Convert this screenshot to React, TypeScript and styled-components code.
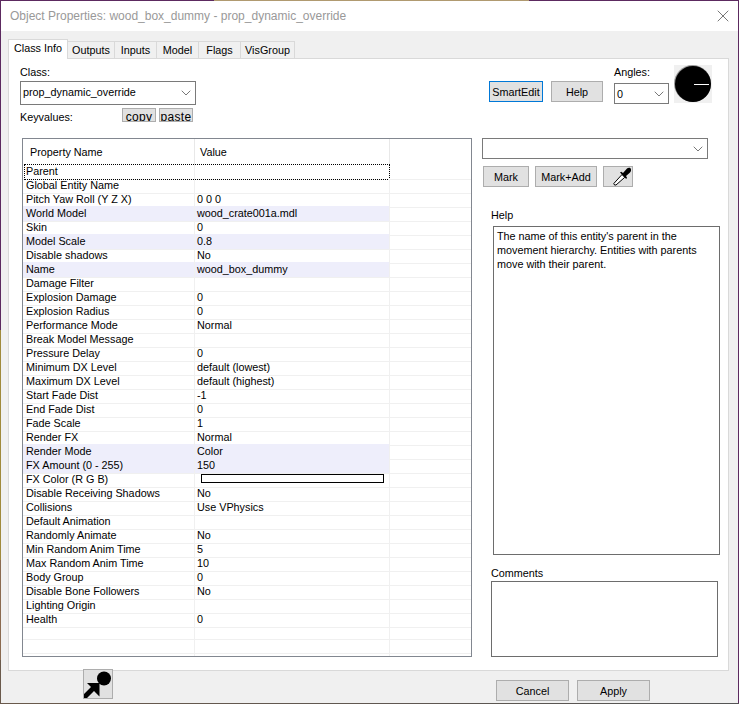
import { ReactNode } from "react";
import styled, { createGlobalStyle } from "styled-components";
import { ChevronDown, X } from "lucide-react";

const GlobalStyle = createGlobalStyle`
  html, body {
    margin: 0;
    padding: 0;
    background: #5c2a60;
  }
  * {
    box-sizing: border-box;
  }
`;

const Dialog = styled.div`
  display: flex;
  flex-direction: column;
  width: 739px;
  height: 704px;
  overflow: hidden;
  padding: 1px 1px 1px 1px;
  background:
    linear-gradient(90deg, #5c2a60 0 214px, #b09a70 214px 529px, #5c2a60 529px) top / 100% 1px no-repeat,
    linear-gradient(90deg, #6a5a4c, #555) bottom / 100% 1px no-repeat,
    linear-gradient(180deg, #5c2a60 0 330px, #a08a3c 330px 560px, #8a6a50 560px 660px, #6a5a4c 660px) left / 1px 100% no-repeat,
    #5c2a60;
  font-family: "Liberation Sans", Arial, sans-serif;
  font-size: 10.8px;
  color: #000;
`;

const TitleBar = styled.div`
  display: flex;
  flex: none;
  align-items: center;
  justify-content: space-between;
  height: 30px;
  padding: 0 5px 0 9px;
  background: #fff;
  color: #999;
  font-size: 12px;
`;

const Body = styled.div`
  display: flex;
  flex: 1;
  flex-direction: column;
  min-height: 0;
  padding: 8px 0 0 7px;
  background: #f0f0f0;
`;

const TabStrip = styled.div`
  display: flex;
  flex: none;
  align-items: flex-end;
  height: 20px;
  position: relative;
  z-index: 1;
  margin-bottom: -1px;
`;

const Tab = styled.div<{ $active?: boolean; $width: number }>`
  display: flex;
  align-items: center;
  justify-content: center;
  width: ${(p) => p.$width}px;
  height: ${(p) => (p.$active ? 20 : 18)}px;
  padding-bottom: ${(p) => (p.$active ? 3 : 0)}px;
  border: 1px solid #d9d9d9;
  border-left-width: ${(p) => (p.$active ? 1 : 0)}px;
  border-bottom: ${(p) => (p.$active ? "none" : "1px solid #d9d9d9")};
  background: ${(p) => (p.$active ? "#fff" : "#f0f0f0")};
`;

const Panel = styled.div`
  display: flex;
  flex: none;
  gap: 10px;
  width: 721px;
  height: 613px;
  padding: 6px 0 0 11px;
  border: 1px solid #d9d9d9;
  background: #fff;
`;

const LeftColumn = styled.div`
  display: flex;
  flex: none;
  flex-direction: column;
  width: 452px;
`;

const RightColumn = styled.div`
  display: flex;
  flex: 1;
  flex-direction: column;
  min-width: 0;
`;

const FieldLabel = styled.div`
  height: 15px;
  line-height: 15px;
  margin-bottom: 1px;
`;

const Select = styled.div<{ $width: number; $height: number }>`
  display: flex;
  flex: none;
  align-items: center;
  justify-content: space-between;
  width: ${(p) => p.$width}px;
  height: ${(p) => p.$height}px;
  padding: 0 1px 0 2px;
  border: 1px solid #7a7a7a;
  background: #fff;
`;

const ClassValue = styled.span`
  margin-bottom: 3px;
`;

const KeyvaluesRow = styled.div`
  display: flex;
  align-items: flex-start;
  height: 30px;
  margin-top: 3px;
`;

const KeyvaluesLabel = styled.div`
  width: 102px;
  margin-top: 3px;
`;

const ClipButton = styled.div<{ $width: number }>`
  width: ${(p) => p.$width}px;
  height: 14px;
  margin-right: 3px;
  overflow: hidden;
  border: 1px solid #adadad;
  background: #e1e1e1;
  text-align: center;
  font-size: 12px;
  line-height: 17px;
  letter-spacing: 0.3px;
`;

const Table = styled.div`
  display: flex;
  flex: none;
  flex-direction: column;
  overflow: hidden;
  width: 450px;
  height: 519px;
  margin-left: 2px;
  border: 1px solid #828790;
  background: #fff;
`;

const HeaderRow = styled.div`
  display: grid;
  flex: none;
  grid-template-columns: 172px 195px 1fr;
  height: 25px;
`;

const HeaderCell = styled.div`
  padding-left: 5px;
  line-height: 27px;
  border-right: 1px solid #e8e8e8;
  &:first-child {
    padding-left: 7px;
  }
  &:last-child {
    border-right: none;
  }
`;

const Row = styled.div<{ $focused?: boolean }>`
  display: grid;
  flex: none;
  position: relative;
  grid-template-columns: 172px 195px 1fr;
  height: 14px;
  line-height: 15px;
  &::after {
    content: "";
    display: ${(p) => (p.$focused ? "block" : "none")};
    position: absolute;
    top: 0;
    left: 1px;
    width: 364px;
    height: 14px;
    border: 1px dotted #000;
  }
`;

const NameCell = styled.div<{ $tinted?: boolean }>`
  padding-left: 3px;
  border-right: 1px solid #f0f0f0;
  border-bottom: 1px solid #f0f0f0;
  background: ${(p) => (p.$tinted ? "#eeeefb" : "transparent")};
  white-space: nowrap;
`;

const ValueCell = styled(NameCell)`
  padding-left: 2px;
`;

const BlankCell = styled.div`
  border-bottom: 1px solid #f0f0f0;
`;

const Swatch = styled.div`
  width: 183px;
  height: 9px;
  margin: 2px 0 0 4px;
  border: 1px solid #000;
  background: #fff;
`;

const ControlsRow = styled.div`
  display: flex;
  align-items: flex-start;
  height: 73px;
  padding-left: 7px;
`;

const PushButton = styled.button<{ $width: number; $default?: boolean }>`
  display: flex;
  flex: none;
  align-items: center;
  justify-content: center;
  width: ${(p) => p.$width}px;
  height: 21px;
  padding: 0;
  border: 1px solid ${(p) => (p.$default ? "#0078d7" : "#adadad")};
  border-radius: 0;
  background: #e1e1e1;
  font: inherit;
  color: #000;
`;

const TopButtons = styled.div`
  display: flex;
  gap: 8px;
  margin-top: 16px;
  width: 125px;
`;

const AnglesBlock = styled.div`
  display: flex;
  flex-direction: column;
  gap: 2px;
  width: 60px;
`;

const MarkRow = styled.div`
  display: flex;
  gap: 6px;
  margin: 7px 0 0 1px;
`;

const BoxLabel = styled.div<{ $top: number }>`
  height: 14px;
  line-height: 14px;
  margin: ${(p) => p.$top}px 0 0 9px;
`;

const HelpBox = styled.div`
  width: 227px;
  height: 329px;
  margin: 4px 0 0 11px;
  padding: 2px 3px;
  border: 1px solid #6d6d6d;
  background: #fff;
  line-height: 14px;
`;

const CommentsBox = styled.div`
  width: 227px;
  height: 76px;
  margin: 1px 0 0 9px;
  border: 1px solid #6d6d6d;
  background: #fff;
`;

const Footer = styled.div`
  display: flex;
  flex: 1;
  align-items: flex-start;
`;

const EntityButton = styled.div`
  position: relative;
  display: flex;
  width: 30px;
  height: 30px;
  margin: -2px 0 0 75px;
  border: 1px solid #adadad;
  background: #e1e1e1;
`;

const FooterButtons = styled.div`
  display: flex;
  gap: 8px;
  margin: 9px 0 0 383px;
`;

const Dial = () => (
  <svg width="38" height="38" viewBox="0 0 38 38" style={{ display: "block", background: "#f0f0f0" }}>
    <circle cx="18.5" cy="18.5" r="18.5" fill="#999" />
    <circle cx="19" cy="19" r="18" fill="#000" />
    <path d="M20 19.5H35" stroke="#fff" strokeWidth="1" />
  </svg>
);

const Dropper = () => (
  <svg width="18" height="19" viewBox="0 0 18 19" style={{ marginLeft: 7 }}>
    <path d="M1.5 18L.8 16.5 9 7.5l2.8 2.8L3 18z" fill="#fff" stroke="#000" />
    <path d="M7 5.5l1.2-.7 1.8 1.2L14 1.5C15.5 0 18 .5 18 2.5c.3 1.5-.5 2.5-1.5 3.5L13 9l1 1.8-.8 1.2z" fill="#000" />
  </svg>
);

const EntityIcon = () => (
  <svg width="28" height="28" viewBox="0 0 28 28">
    <circle cx="20" cy="8.5" r="7" fill="#000" />
    <path d="M15.5 13H3l4 4-7 7v4h3l7-7 5.5 5.5z" fill="#000" />
  </svg>
);

const Chevron = () => <ChevronDown size={16} strokeWidth={1} color="#333" />;

type Prop = { name: string; value?: string; tinted?: boolean; color?: boolean };

const tabs = [
  { label: "Class Info", width: 60, active: true },
  { label: "Outputs", width: 47 },
  { label: "Inputs", width: 42 },
  { label: "Model", width: 42 },
  { label: "Flags", width: 42 },
  { label: "VisGroup", width: 54 },
];

const props: Prop[] = [
  { name: "Parent" },
  { name: "Global Entity Name" },
  { name: "Pitch Yaw Roll (Y Z X)", value: "0 0 0" },
  { name: "World Model", value: "wood_crate001a.mdl", tinted: true },
  { name: "Skin", value: "0" },
  { name: "Model Scale", value: "0.8", tinted: true },
  { name: "Disable shadows", value: "No" },
  { name: "Name", value: "wood_box_dummy", tinted: true },
  { name: "Damage Filter" },
  { name: "Explosion Damage", value: "0" },
  { name: "Explosion Radius", value: "0" },
  { name: "Performance Mode", value: "Normal" },
  { name: "Break Model Message" },
  { name: "Pressure Delay", value: "0" },
  { name: "Minimum DX Level", value: "default (lowest)" },
  { name: "Maximum DX Level", value: "default (highest)" },
  { name: "Start Fade Dist", value: "-1" },
  { name: "End Fade Dist", value: "0" },
  { name: "Fade Scale", value: "1" },
  { name: "Render FX", value: "Normal" },
  { name: "Render Mode", value: "Color", tinted: true },
  { name: "FX Amount (0 - 255)", value: "150", tinted: true },
  { name: "FX Color (R G B)", color: true },
  { name: "Disable Receiving Shadows", value: "No" },
  { name: "Collisions", value: "Use VPhysics" },
  { name: "Default Animation" },
  { name: "Randomly Animate", value: "No" },
  { name: "Min Random Anim Time", value: "5" },
  { name: "Max Random Anim Time", value: "10" },
  { name: "Body Group", value: "0" },
  { name: "Disable Bone Followers", value: "No" },
  { name: "Lighting Origin" },
  { name: "Health", value: "0" },
  { name: "" },
  { name: "" },
  { name: "" },
];

const PropRow = ({ prop, focused }: { prop: Prop; focused: boolean }): ReactNode => (
  <Row $focused={focused}>
    <NameCell $tinted={prop.tinted}>{prop.name}</NameCell>
    <ValueCell $tinted={prop.tinted}>{prop.color ? <Swatch /> : prop.value}</ValueCell>
    <BlankCell />
  </Row>
);

const App = () => (
  <Dialog>
    <GlobalStyle />
    <TitleBar>
      <span>Object Properties: wood_box_dummy - prop_dynamic_override</span>
      <X size={20} strokeWidth={1.2} color="#777" />
    </TitleBar>
    <Body>
      <TabStrip>
        {tabs.map((t) => (
          <Tab key={t.label} $active={t.active} $width={t.width}>
            {t.label}
          </Tab>
        ))}
      </TabStrip>
      <Panel>
        <LeftColumn>
          <FieldLabel>Class:</FieldLabel>
          <Select $width={176} $height={24}>
            <ClassValue>prop_dynamic_override</ClassValue>
            <Chevron />
          </Select>
          <KeyvaluesRow>
            <KeyvaluesLabel>Keyvalues:</KeyvaluesLabel>
            <ClipButton $width={34}>copy</ClipButton>
            <ClipButton $width={34}>paste</ClipButton>
          </KeyvaluesRow>
          <Table>
            <HeaderRow>
              <HeaderCell>Property Name</HeaderCell>
              <HeaderCell>Value</HeaderCell>
              <HeaderCell />
            </HeaderRow>
            {props.map((p, i) => (
              <PropRow key={i} prop={p} focused={i === 0} />
            ))}
          </Table>
        </LeftColumn>
        <RightColumn>
          <ControlsRow>
            <TopButtons>
              <PushButton $width={54} $default>SmartEdit</PushButton>
              <PushButton $width={52}>Help</PushButton>
            </TopButtons>
            <AnglesBlock>
              <FieldLabel>Angles:</FieldLabel>
              <Select $width={55} $height={21}>
                <span>0</span>
                <Chevron />
              </Select>
            </AnglesBlock>
            <Dial />
          </ControlsRow>
          <Select $width={226} $height={21}>
            <span />
            <Chevron />
          </Select>
          <MarkRow>
            <PushButton $width={46}>Mark</PushButton>
            <PushButton $width={62}>Mark+Add</PushButton>
            <PushButton $width={30}><Dropper /></PushButton>
          </MarkRow>
          <BoxLabel $top={21}>Help</BoxLabel>
          <HelpBox>
            The name of this entity's parent in the movement hierarchy. Entities with parents move with their parent.
          </HelpBox>
          <BoxLabel $top={11}>Comments</BoxLabel>
          <CommentsBox />
        </RightColumn>
      </Panel>
      <Footer>
        <EntityButton><EntityIcon /></EntityButton>
        <FooterButtons>
          <PushButton $width={73}>Cancel</PushButton>
          <PushButton $width={73}>Apply</PushButton>
        </FooterButtons>
      </Footer>
    </Body>
  </Dialog>
);

export default App;
